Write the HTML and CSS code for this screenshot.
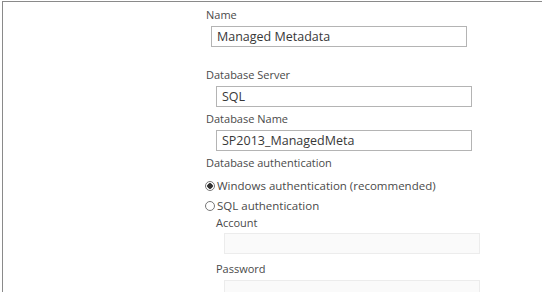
FILE: index.html
```html
<!DOCTYPE html>
<html lang="en">
<head>
    <meta charset="UTF-8">
    <title>Managed Metadata Service</title>
    <link rel="stylesheet" href="styles.css">
</head>
<body>
    <div class="frame">
        <form class="settings">
            <div class="field">
                <label class="label">Name</label>
                <input class="box box-name" type="text" value="Managed Metadata">
            </div>
            <div class="field field-gap">
                <label class="label">Database Server</label>
                <input class="box" type="text" value="SQL">
            </div>
            <div class="field">
                <label class="label">Database Name</label>
                <input class="box" type="text" value="SP2013_ManagedMeta">
            </div>
            <div class="field">
                <span class="label">Database authentication</span>
                <label class="radio radio-first"><span class="dot checked"></span>Windows authentication (recommended)</label>
                <label class="radio"><span class="dot"></span>SQL authentication</label>
                <div class="sub">
                    <label class="label">Account</label>
                    <input class="box box-off" type="text" disabled>
                    <label class="label label-pw">Password</label>
                    <input class="box box-off" type="password" disabled>
                </div>
            </div>
        </form>
    </div>
</body>
</html>
```

FILE: styles.css
```css
body {
    margin: 0;
    background-color: #fff;
    font-family: "Open Sans", "Noto Sans", sans-serif;
    font-size: 11px;
    color: #4a4a4a;
    overflow: hidden;
}
.frame {
    margin: 1px 0 0 2px;
    height: 290px;
    border-top: 1px solid #8a8a8a;
    border-left: 1px solid #8a8a8a;
}
.settings {
    padding: 5px 0 0 203px;
}
.field {
    display: flex;
    flex-direction: column;
    align-items: flex-start;
}
.field-gap {
    margin-top: 16px;
}
.label {
    display: block;
    line-height: 16px;
    margin-bottom: 3px;
}
.box {
    box-sizing: border-box;
    width: 256px;
    height: 21px;
    margin: 0 0 4px 10px;
    padding: 0 5px;
    border: 1px solid #b4b4b4;
    background-color: #fff;
    font-family: inherit;
    font-size: 12.5px;
    color: #383838;
    outline: none;
}
.box-name {
    margin-left: 5px;
}
.radio {
    display: flex;
    align-items: center;
    line-height: 16px;
    margin-left: -1px;
    font-size: 11.5px;
}
.radio-first {
    margin-top: 4px;
    margin-bottom: 4px;
}
.dot {
    box-sizing: border-box;
    width: 10px;
    height: 10px;
    margin-right: 2px;
    border: 1px solid #777;
    border-radius: 50%;
    background-color: #fff;
}
.dot.checked {
    background: radial-gradient(circle, #333 0 2.5px, #fff 3px);
}
.sub {
    display: flex;
    flex-direction: column;
    align-items: flex-start;
    padding-left: 10px;
    margin-top: 1px;
}
.sub .label {
    margin-bottom: 2px;
}
.box-off {
    margin-left: 8px;
    border-color: #ececec;
    background-color: #fafafa;
}
.sub .label-pw {
    margin-top: 3px;
    margin-bottom: 3px;
}
```
